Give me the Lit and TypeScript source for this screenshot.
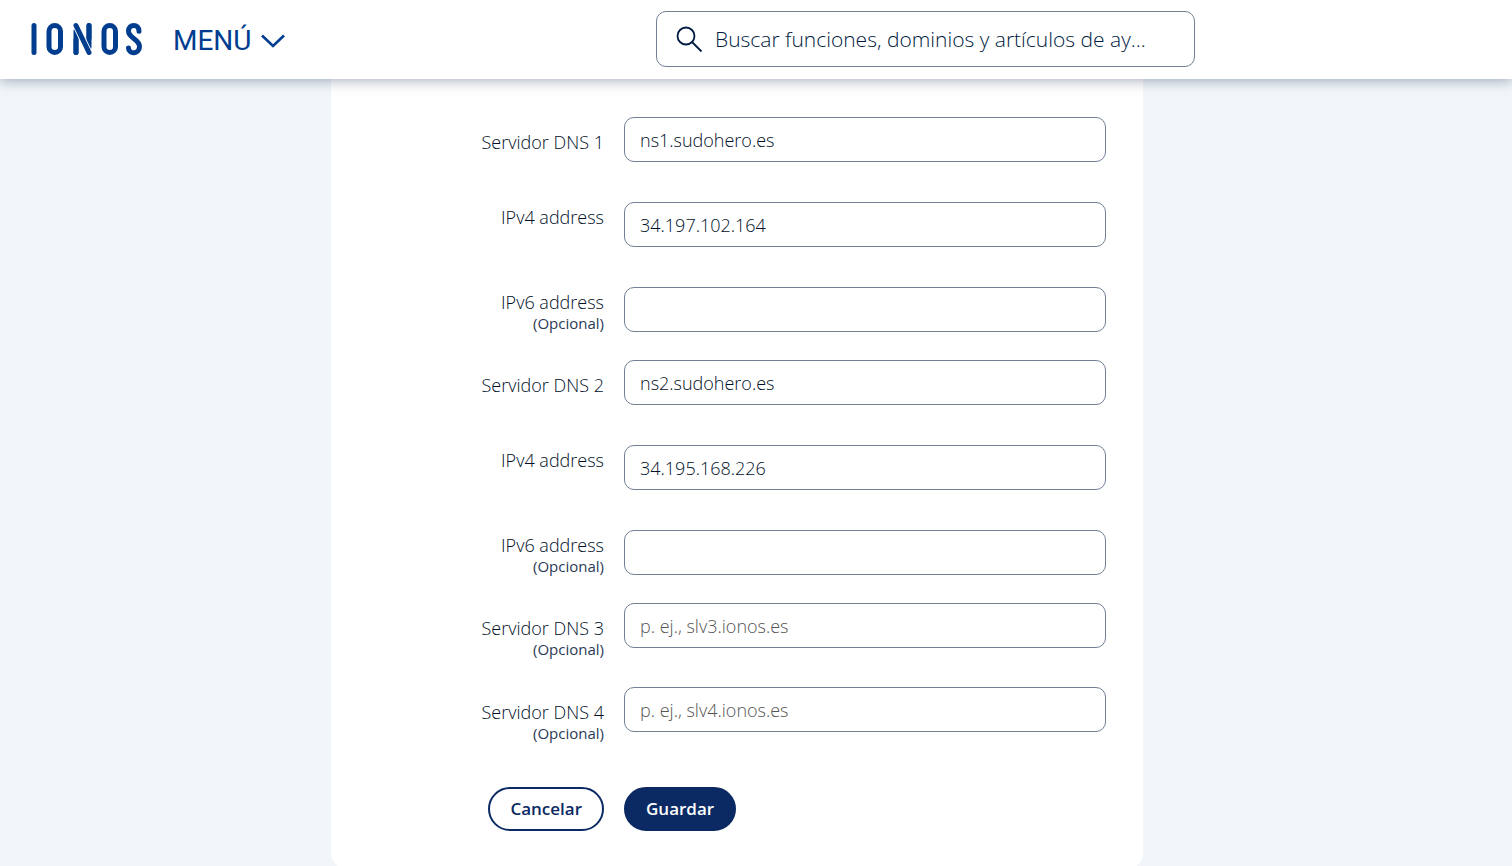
import { LitElement, html, css, nothing } from "lit";
import { customElement, property } from "lit/decorators.js";

interface Field {
  id: string;
  label: string;
  value?: string;
  placeholder?: string;
  optional?: boolean;
}

const GROUPS: Field[][] = [
  [
    { id: "dns1", label: "Servidor DNS 1", value: "ns1.sudohero.es" },
    { id: "dns1-v4", label: "IPv4 address", value: "34.197.102.164" },
    { id: "dns1-v6", label: "IPv6 address", optional: true },
  ],
  [
    { id: "dns2", label: "Servidor DNS 2", value: "ns2.sudohero.es" },
    { id: "dns2-v4", label: "IPv4 address", value: "34.195.168.226" },
    { id: "dns2-v6", label: "IPv6 address", optional: true },
  ],
  [{ id: "dns3", label: "Servidor DNS 3", placeholder: "p. ej., slv3.ionos.es", optional: true }],
  [{ id: "dns4", label: "Servidor DNS 4", placeholder: "p. ej., slv4.ionos.es", optional: true }],
];

@customElement("site-header")
class SiteHeader extends LitElement {
  static styles = css`
    :host {
      display: block;
      position: relative;
      z-index: 1;
      background: #fff;
      box-shadow: 0 2px 12px rgba(0, 27, 65, 0.34);
    }
    .bar {
      display: grid;
      grid-template-columns: minmax(300px, 656fr) minmax(300px, 539fr) 317fr;
      align-items: center;
      box-sizing: border-box;
      min-height: 79px;
      padding-bottom: 1px;
    }
    .brand {
      display: flex;
      align-items: center;
      gap: 29px;
      padding-left: 30px;
    }
    .home {
      display: flex;
    }
    .menu {
      display: flex;
      align-items: center;
      gap: 9px;
      padding: 4px 0 0;
      border: 0;
      background: none;
      color: #003d8f;
      font: 450 28px/32px Roboto, "Open Sans", sans-serif;
      cursor: pointer;
    }
    .search {
      display: flex;
      align-items: center;
      gap: 12px;
      box-sizing: border-box;
      height: 56px;
      padding: 0 40px 0 19px;
      border: 1px solid #718095;
      border-radius: 10px;
      color: #001b41;
    }
    .search svg {
      flex: none;
    }
    .query {
      flex: 1;
      min-width: 0;
      height: 54px;
      padding: 0;
      border: 0;
      outline: 0;
      background: none;
      color: #001b41;
      font: 300 21px/28px "Open Sans", sans-serif;
      text-overflow: ellipsis;
    }
    .query::placeholder {
      color: #001b41;
      opacity: 1;
    }
  `;

  render() {
    return html`
      <header class="bar">
        <div class="brand">
          <a class="home" href="#" aria-label="IONOS">
            <svg width="114" height="34" viewBox="0 0 114 34" fill="none" stroke="#003d8f" stroke-width="5" stroke-linecap="round">
              <line x1="4" y1="3.5" x2="4" y2="30.5" />
              <rect x="19" y="3.5" width="11.5" height="27" rx="5.75" />
              <path d="M46 9V30.500M59 3.500V25" />
              <path d="M46 3.500L59 30.500" stroke="#fff" stroke-width="6.600" />
              <path d="M46 3.500L59 30.500" />
              <path d="M46 18V30.500M59 3.500V16" />
              <rect x="74" y="3.5" width="11.500" height="27" rx="5.75" />
              <path d="M109 9.200C109 1.500 98.500 1.500 98.500 9.200C98.500 16 109.500 17 109.500 24.500C109.500 32.500 98.500 32.500 98.500 26" />
            </svg>
          </a>
          <button class="menu" type="button">
            MENÚ
            <svg width="24" height="14" viewBox="0 0 24 14" fill="none" stroke="currentColor" stroke-width="2.600">
              <path d="M1 1.500L12 12L23 1.500" />
            </svg>
          </button>
        </div>
        <label class="search">
          <svg width="27" height="27" viewBox="0 0 27 27" fill="none" stroke="currentColor" stroke-width="1.800">
            <circle cx="10" cy="10" r="8.500" />
            <path d="M16 16L25.500 25.500" />
          </svg>
          <input
            class="query"
            type="text"
            role="searchbox"
            aria-label="Buscar"
            placeholder="Buscar funciones, dominios y artículos de ayuda"
          />
        </label>
      </header>
    `;
  }
}

@customElement("dns-field")
class DnsField extends LitElement {
  @property({ attribute: false }) field!: Field;
  @property({ type: Boolean }) server = false;

  static styles = css`
    :host {
      display: grid;
      grid-template-columns: 236fr 482fr;
      column-gap: 20px;
      align-items: start;
    }
    .label {
      padding-top: 3px;
      color: #001028;
      font-size: 18px;
      line-height: 24px;
      text-align: right;
    }
    :host([server]) .label {
      padding-top: 13px;
    }
    .optional {
      display: block;
      color: #2a3a55;
      font-size: 15px;
      font-weight: 400;
      line-height: 18px;
    }
    .input {
      box-sizing: border-box;
      width: 100%;
      height: 45px;
      padding: 0 15px;
      border: 1px solid #718095;
      border-radius: 10px;
      background: #fff;
      color: #001028;
      font: inherit;
      font-size: 18px;
    }
    .input::placeholder {
      color: #555;
      opacity: 1;
    }
  `;

  render() {
    const f = this.field;
    return html`
      <label class="label" for=${f.id}>
        ${f.label}${f.optional ? html`<span class="optional">(Opcional)</span>` : nothing}
      </label>
      <input class="input" id=${f.id} type="text" .value=${f.value ?? ""} placeholder=${f.placeholder ?? nothing} />
    `;
  }
}

@customElement("app-root")
class AppRoot extends LitElement {
  static styles = css`
    :host {
      display: flex;
      flex-direction: column;
      height: 100vh;
      background: #f2f6fa;
      font-family: "Open Sans", sans-serif;
      font-weight: 300;
    }
    .page {
      flex: 1;
      min-height: 0;
      padding-right: 38px;
      overflow-y: auto;
      scrollbar-width: none;
    }
    .card {
      box-sizing: border-box;
      max-width: 812px;
      margin: 0 auto 40px;
      padding: 38px 37px;
      border-radius: 0 0 16px 16px;
      background: #fff;
    }
    .groups {
      display: grid;
      gap: 28px;
    }
    .group {
      display: grid;
      gap: 40px;
      align-content: start;
      min-height: 56px;
    }
    .actions {
      display: grid;
      grid-template-columns: 236fr 482fr;
      column-gap: 20px;
      margin-top: 44px;
    }
    .button {
      box-sizing: border-box;
      height: 44px;
      padding: 0 20px;
      border: 2px solid #0b2a63;
      border-radius: 22px;
      background: #fff;
      color: #0b2a63;
      font: 600 17px/24px "Open Sans", sans-serif;
      cursor: pointer;
    }
    .cancel {
      justify-self: end;
    }
    .save {
      justify-self: start;
      background: #0b2a63;
      color: #fff;
    }
  `;

  render() {
    return html`
      <site-header></site-header>
      <main class="page">
        <form class="card" @submit=${(e: Event) => e.preventDefault()}>
          <div class="groups">
            ${GROUPS.map(
              (group) => html`
                <div class="group">
                  ${group.map((f, i) => html`<dns-field .field=${f} ?server=${i === 0}></dns-field>`)}
                </div>
              `
            )}
          </div>
          <div class="actions">
            <button class="button cancel" type="button">Cancelar</button>
            <button class="button save" type="submit">Guardar</button>
          </div>
        </form>
      </main>
    `;
  }
}
